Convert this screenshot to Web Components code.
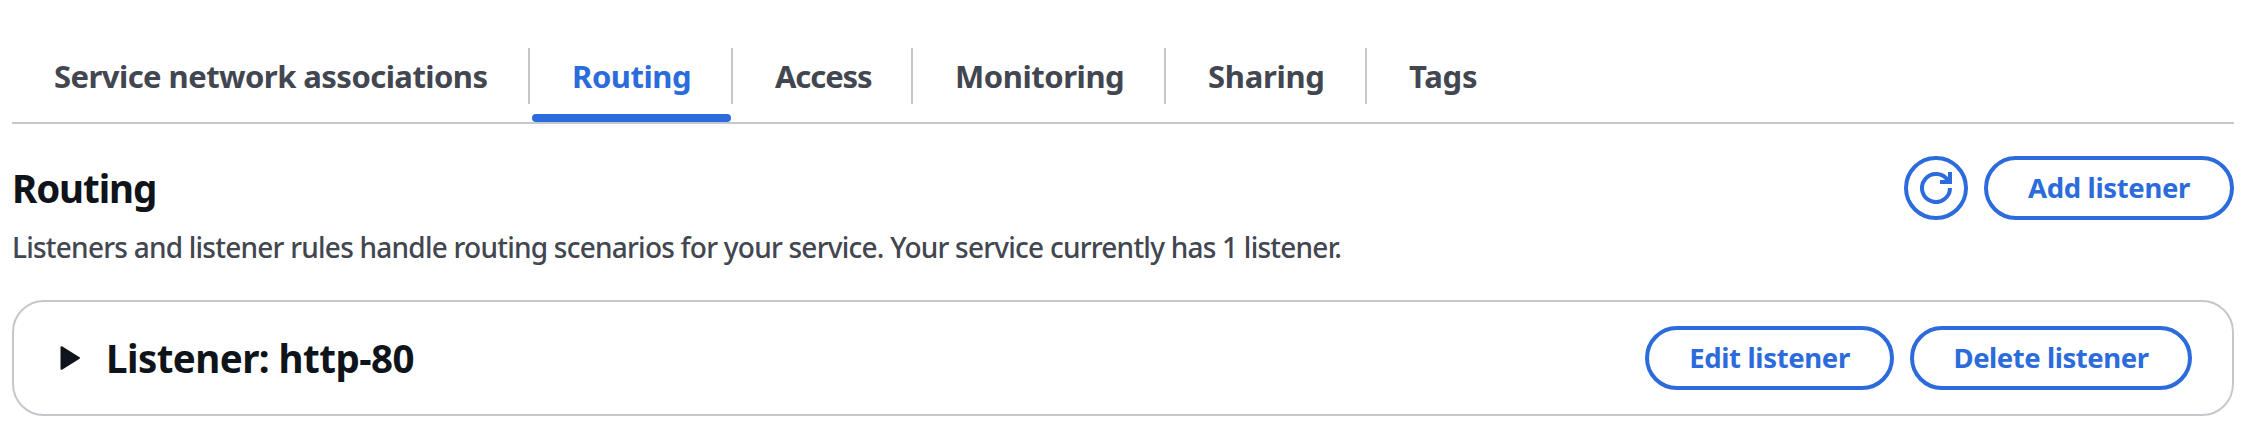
<!DOCTYPE html>
<html lang="en">
<head>
<meta charset="utf-8">
<title>Routing</title>
<style>
    body {
        margin: 0;
        background: #fff;
        color: #424650;
        font-family: "Noto Sans", "Open Sans", sans-serif;
    }
</style>
</head>
<body>
<service-page>
    <tab-bar slot="tabs">
        <tab-item style="width: 518px; --track: -0.55px">Service network associations</tab-item>
        <tab-item active style="width: 203px">Routing</tab-item>
        <tab-item style="width: 180px; --track: -1.1px">Access</tab-item>
        <tab-item style="width: 253px">Monitoring</tab-item>
        <tab-item style="width: 201px; --track: -0.3px">Sharing</tab-item>
        <tab-item style="width: 160px; --track: -0.2px">Tags</tab-item>
    </tab-bar>
    <section-header>
        Routing
        <span slot="description">Listeners and listener rules handle routing scenarios for your service. Your service currently has 1 listener.</span>
        <pill-button slot="actions" icon><refresh-icon></refresh-icon></pill-button>
        <pill-button slot="actions" style="width: 250px">Add listener</pill-button>
    </section-header>
    <listener-card>
        Listener: http-80
        <pill-button slot="actions" style="width: 249px">Edit listener</pill-button>
        <pill-button slot="actions" style="width: 282px; --track: -0.45px">Delete listener</pill-button>
    </listener-card>
</service-page>

<script>
class BaseElement extends HTMLElement {
    constructor() {
        super();
        this.attachShadow({mode: 'open'});
        this.shadowRoot.innerHTML = this.constructor.html;
    }
}

class ServicePage extends BaseElement {
    static html = `
        <style>
            :host {
                display: flex;
                flex-direction: column;
                box-sizing: border-box;
                height: 422px;
                padding: 28px 24px 0 12px;
            }
        </style>
        <slot name="tabs"></slot>
        <slot></slot>`;
}

class TabBar extends BaseElement {
    static html = `
        <style>
            :host {
                display: flex;
                height: 94px;
                border-bottom: 2px solid #c6c6cd;
            }
        </style>
        <slot></slot>`;
}

class TabItem extends BaseElement {
    static html = `
        <style>
            :host {
                display: grid;
                grid-template-rows: 20px 56px 10px 8px;
                flex: none;
                color: #424650;
                font-size: 31px;
                font-weight: 700;
                letter-spacing: var(--track, -0.45px);
                white-space: nowrap;
                cursor: pointer;
            }
            .label {
                grid-row: 2;
                padding-left: 42px;
                line-height: 56px;
                border-right: 2px solid #c6c6cd;
            }
            .line {
                grid-row: 4;
                margin: 0 2px;
                border-radius: 4px;
            }
            :host(:last-child) .label {
                border-right: none;
            }
            :host([active]) {
                color: #2c6bdb;
            }
            :host([active]) .line {
                background: #2c6bdb;
            }
        </style>
        <div class="label"><slot></slot></div>
        <div class="line"></div>`;
}

class SectionHeader extends BaseElement {
    static html = `
        <style>
            :host {
                display: block;
                height: 176px;
                box-sizing: border-box;
                padding-top: 32px;
            }
            .top {
                display: flex;
                justify-content: space-between;
                height: 64px;
            }
            h2 {
                margin: 0;
                color: #0f141a;
                font-size: 38.5px;
                line-height: 65px;
                letter-spacing: -1.1px;
            }
            .actions {
                display: flex;
                gap: 16px;
            }
            .description {
                margin-top: 7px;
                font-size: 28px;
                font-weight: 500;
                line-height: 40px;
                letter-spacing: -0.765px;
                white-space: nowrap;
            }
        </style>
        <div class="top">
            <h2><slot></slot></h2>
            <div class="actions"><slot name="actions"></slot></div>
        </div>
        <div class="description"><slot name="description"></slot></div>`;
}

class ListenerCard extends BaseElement {
    static html = `
        <style>
            :host {
                display: flex;
                align-items: center;
                box-sizing: border-box;
                height: 116px;
                padding: 0 40px 0 46px;
                border: 2px solid #c6c6cd;
                border-radius: 32px;
            }
            svg {
                flex: none;
                width: 20px;
                height: 26px;
                margin-right: 26px;
                fill: #0f141a;
                stroke: #0f141a;
                stroke-width: 2;
                stroke-linejoin: round;
            }
            h2 {
                flex: 1;
                margin: 0;
                color: #0f141a;
                font-size: 38.5px;
                line-height: 52px;
                letter-spacing: -0.55px;
            }
            .actions {
                display: flex;
                gap: 16px;
            }
        </style>
        <svg viewBox="0 0 20 26"><path d="M1.5 2.2v21.6L19 13z"/></svg>
        <h2><slot></slot></h2>
        <div class="actions"><slot name="actions"></slot></div>`;
}

class PillButton extends BaseElement {
    static html = `
        <style>
            :host {
                display: flex;
                flex: none;
                align-items: center;
                justify-content: center;
                box-sizing: border-box;
                height: 64px;
                padding-bottom: 2px;
                border: 4px solid #2c6bdb;
                border-radius: 32px;
                color: #2c6bdb;
                font-size: 27.5px;
                font-weight: 700;
                letter-spacing: var(--track, -0.35px);
                white-space: nowrap;
                cursor: pointer;
            }
            :host([icon]) {
                width: 64px;
                padding: 0;
            }
        </style>
        <slot></slot>`;
}

class RefreshIcon extends BaseElement {
    static html = `
        <style>
            :host {
                display: block;
                width: 32px;
                height: 32px;
            }
            svg {
                display: block;
                fill: none;
                stroke: #2c6bdb;
                stroke-width: 4;
            }
        </style>
        <svg width="32" height="32" viewBox="0 0 32 32">
            <path d="M30 16A14 14 0 1 1 28.1 9"/>
            <path d="M20 10h10V0"/>
        </svg>`;
}

customElements.define('service-page', ServicePage);
customElements.define('tab-bar', TabBar);
customElements.define('tab-item', TabItem);
customElements.define('section-header', SectionHeader);
customElements.define('listener-card', ListenerCard);
customElements.define('pill-button', PillButton);
customElements.define('refresh-icon', RefreshIcon);
</script>
</body>
</html>
